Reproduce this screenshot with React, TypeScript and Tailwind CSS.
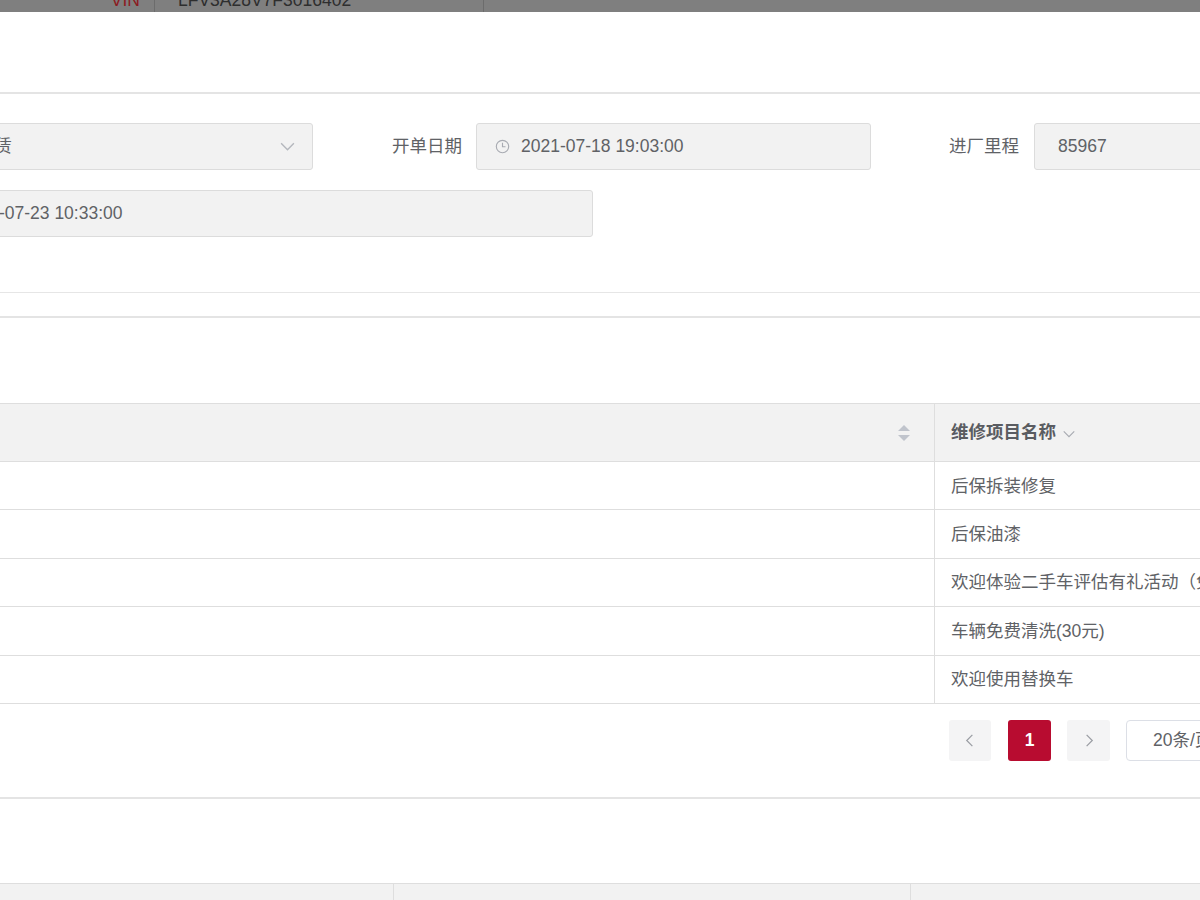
import React from 'react'

const rows = ['后保拆装修复', '后保油漆', '欢迎体验二手车评估有礼活动（免费）', '车辆免费清洗(30元)', '欢迎使用替换车']

function Chevron({ dir, className }: { dir: 'down' | 'left' | 'right'; className?: string }) {
  const d = dir === 'down' ? 'M2 5l6 6 6-6' : dir === 'left' ? 'M10 2L4 8l6 6' : 'M6 2l6 6-6 6'
  return (
    <svg viewBox="0 0 16 16" className={className} fill="none" stroke="currentColor" strokeWidth="1.3">
      <path d={d} />
    </svg>
  )
}

function Clock() {
  return (
    <svg viewBox="0 0 16 16" className="w-[15px] h-[15px] text-[#a8abb2]" fill="none" stroke="currentColor" strokeWidth="1.2">
      <circle cx="8" cy="8" r="6.6" />
      <path d="M8 4v4.2h3.2" />
    </svg>
  )
}

export default function App() {
  return (
    <div
      className="w-[1200px] h-[900px] overflow-hidden bg-white text-[17.5px] text-[#606266]"
      style={{ fontFamily: '"Liberation Sans", "Noto Sans CJK SC", sans-serif' }}
    >
      {/* masked vehicle info strip */}
      <div className="h-[12px] bg-[#7f7f7f] overflow-hidden">
        <div className="flex h-[24px] mt-[-12px]">
          <div className="w-[154px] pr-[14px] flex items-center justify-end text-[#8c1b22]">VIN</div>
          <div className="w-[330px] border-x border-[#6c6c6c] pl-[23px] flex items-center text-[#2e2e2e]">LFV3A28V7F3016402</div>
        </div>
      </div>
      <div className="h-[80px]" />
      <div className="h-[2px] bg-[#e4e4e4]" />

      {/* form */}
      <div className="pt-[29px]">
        <div className="flex items-center h-[47px]">
          <div className="ml-[-42px] w-[355px] h-full shrink-0 flex items-center justify-between pl-[18px] pr-[16px] bg-[#f2f2f2] border border-[#dcdcdc] rounded-[3px]">
            <span>租赁</span>
            <Chevron dir="down" className="w-[17px] h-[17px] text-[#b4b7bd]" />
          </div>
          <div className="w-[163px] shrink-0 pr-[14px] text-right">开单日期</div>
          <div className="w-[395px] h-full shrink-0 flex items-center gap-[11px] pl-[18px] bg-[#f2f2f2] border border-[#dcdcdc] rounded-[3px]">
            <Clock />
            <span>2021-07-18 19:03:00</span>
          </div>
          <div className="w-[163px] shrink-0 pr-[15px] text-right">进厂里程</div>
          <div className="w-[395px] h-full shrink-0 flex items-center pl-[23px] bg-[#f2f2f2] border border-[#dcdcdc] rounded-[3px]">
            85967
          </div>
        </div>
        <div className="flex items-center h-[47px] mt-[20px]">
          <div className="ml-[-64px] w-[657px] h-full shrink-0 flex items-center pl-[23px] bg-[#f2f2f2] border border-[#dcdcdc] rounded-[3px]">
            2021-07-23 10:33:00
          </div>
        </div>
      </div>

      <div className="h-[55px]" />
      <div className="h-px bg-[#e6e6e6]" />
      <div className="h-[23px]" />
      <div className="h-[2px] bg-[#e4e4e4]" />
      <div className="h-[85px]" />

      {/* table */}
      <div className="border-t border-[#dedede] w-[1400px]">
        <div className="flex h-[58px] bg-[#f2f2f2] border-b border-[#dedede]">
          <div className="w-[935px] shrink-0 border-r border-[#dedede] flex items-center justify-end pr-[23px]">
            <svg viewBox="0 0 14 20" className="w-[14px] h-[20px] text-[#c0c4cc]" fill="currentColor">
              <path d="M7 2l6 6H1z" />
              <path d="M7 18l6-6H1z" />
            </svg>
          </div>
          <div className="flex items-center pl-[16px] gap-[6px] font-semibold text-[#5a5c61]">
            <span>维修项目名称</span>
            <Chevron dir="down" className="w-[14px] h-[14px] text-[#a8abb2] mt-[2px]" />
          </div>
        </div>
        {rows.map((r) => (
          <div key={r} className="flex h-[48.4px] border-b border-[#dedede]">
            <div className="w-[935px] shrink-0 border-r border-[#dedede]" />
            <div className="flex items-center pl-[16px] whitespace-nowrap">{r}</div>
          </div>
        ))}
      </div>

      {/* pagination */}
      <div className="flex items-center h-[41px] mt-[16px] pl-[949px] gap-[16px] w-[1400px]">
        <button className="w-[42px] h-[41px] rounded-[3px] bg-[#f4f4f5] flex items-center justify-center text-[#9a9da3]">
          <Chevron dir="left" className="w-[15px] h-[15px]" />
        </button>
        <button className="w-[43px] h-[41px] ml-px rounded-[3px] bg-[#b80c30] text-white font-bold">1</button>
        <button className="w-[43px] h-[41px] rounded-[3px] bg-[#f4f4f5] flex items-center justify-center text-[#9a9da3]">
          <Chevron dir="right" className="w-[15px] h-[15px]" />
        </button>
        <div className="w-[150px] h-[41px] rounded-[4px] border border-[#dcdfe6] flex items-center pl-[26px] whitespace-nowrap">
          20条/页
        </div>
      </div>

      <div className="h-[36px]" />
      <div className="h-[2px] bg-[#e4e4e4]" />
      <div className="h-[84px]" />

      {/* next table header */}
      <div className="flex h-[20px] bg-[#f2f2f2] border-t border-[#dedede]">
        <div className="w-[394px] shrink-0 border-r border-[#dedede]" />
        <div className="w-[517px] shrink-0 border-r border-[#dedede]" />
        <div className="flex-1" />
      </div>
    </div>
  )
}
